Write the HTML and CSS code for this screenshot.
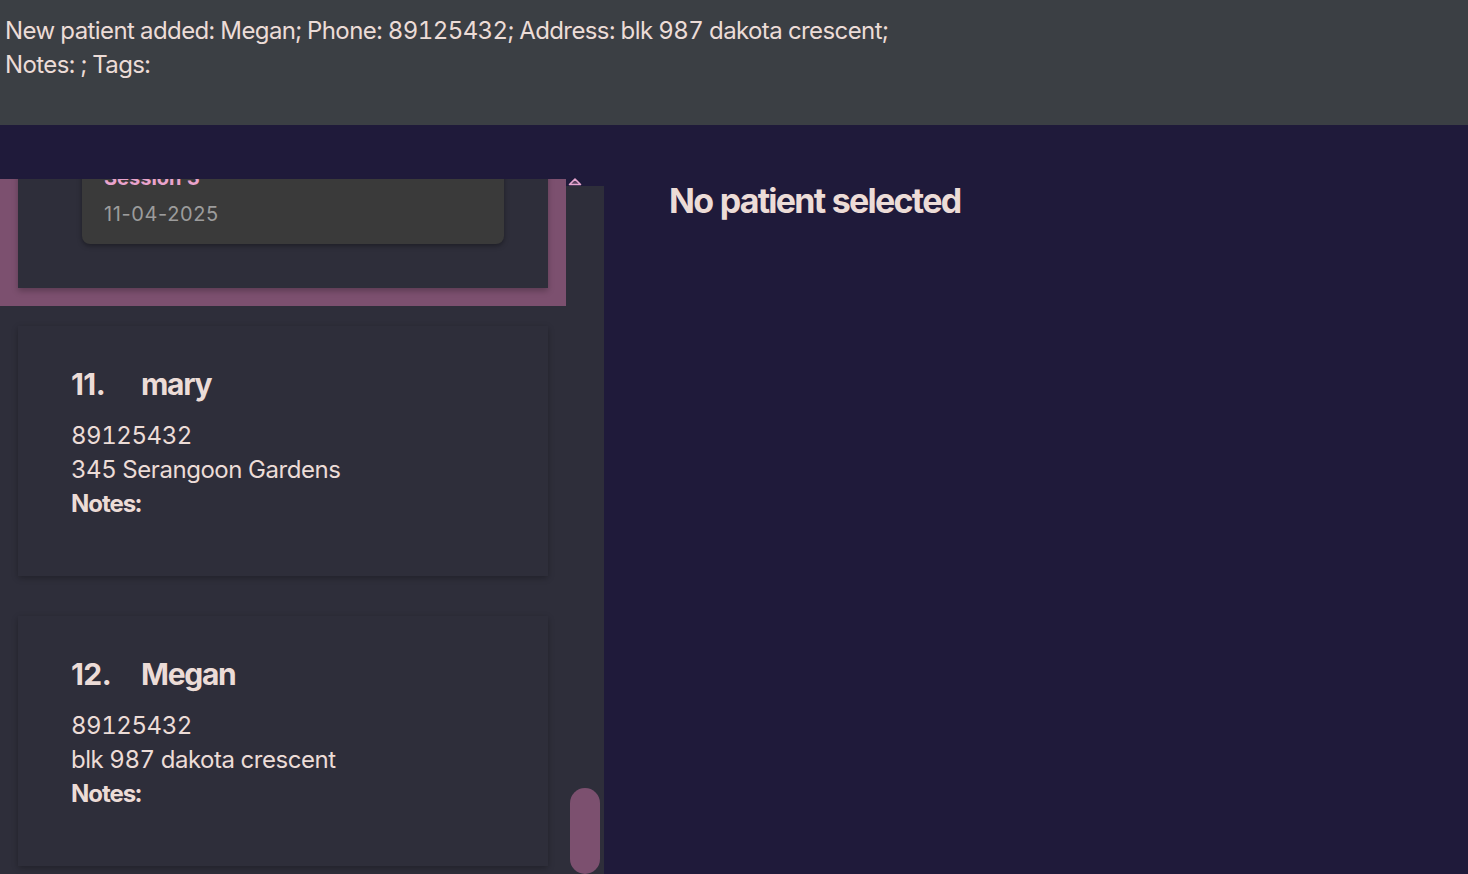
FILE: index.html
```html
<!DOCTYPE html>
<html lang="en">
<head>
<meta charset="utf-8">
<title>Patients</title>
<link rel="stylesheet" href="styles.css">
</head>
<body>
<div class="result">
  <div>New patient added: Megan; Phone: 89125432; Address: blk 987 dakota crescent;</div>
  <div>Notes: ; Tags:</div>
</div>
<div class="main">
  <div class="list-pane">
    <div class="list">
      <div class="list-inner">
        <div class="cell selected">
          <div class="card card-selected">
            <div class="session">
              <div class="session-title">Session 3</div>
              <div class="session-date">11-04-2025</div>
            </div>
          </div>
        </div>
        <div class="cell">
          <div class="card">
            <div class="title"><span class="idx">11.</span><span class="name">mary</span></div>
            <div class="line">89125432</div>
            <div class="line">345 Serangoon Gardens</div>
            <div class="line bold">Notes:</div>
          </div>
        </div>
        <div class="cell">
          <div class="card">
            <div class="title"><span class="idx">12.</span><span class="name">Megan</span></div>
            <div class="line">89125432</div>
            <div class="line">blk 987 dakota crescent</div>
            <div class="line bold">Notes:</div>
          </div>
        </div>
      </div>
    </div>
    <div class="scrollbar">
      <svg class="arrow" width="14" height="10" viewBox="0 0 14 10"><path d="M1.5 8.5 L7 3 L12.5 8.5 Z" fill="#5a4260" stroke="#e7a6cf" stroke-width="1.6" stroke-linejoin="round"/></svg>
      <div class="thumb"></div>
    </div>
  </div>
  <div class="detail">
    <div class="empty">No patient selected</div>
  </div>
</div>
</body>
</html>
```

FILE: styles.css
```css
* { box-sizing: border-box; }
html, body { margin: 0; padding: 0; }
body {
  width: 1468px;
  height: 874px;
  overflow: hidden;
  background: #1f1a3a;
  font-family: Inter, "Noto Sans", sans-serif;
  font-variant-numeric: tabular-nums;
  color: #ecdcd7;
}
.result {
  height: 125px;
  background: #3b3f44;
  padding: 14px 5px 0;
  font-size: 24px;
  line-height: 34px;
  letter-spacing: -0.6px;
}
.main {
  display: flex;
  height: 749px;
}
.list-pane {
  width: 604px;
  margin-top: 54px;
  display: flex;
  flex: none;
}
.list {
  width: 566px;
  height: 695px;
  overflow: hidden;
  background: #2e2e3a;
}
.list-inner {
  margin-top: -27px;
}
.cell {
  padding: 20px 18px;
}
.cell.selected {
  background: #7c506f;
  padding: 0 18px 18px;
}
.card {
  background: #2e2e3a;
  height: 250px;
  padding: 40px 20px 0 53px;
  box-shadow: 0 2px 6px rgba(0, 0, 0, 0.28);
}
.card-selected {
  height: auto;
  padding: 0 44px 44px 64px;
  box-shadow: 0 3px 6px rgba(0, 0, 0, 0.25);
}
.session {
  background: #3a3a3a;
  border-radius: 0 0 8px 8px;
  padding: 12px 22px 16px;
  box-shadow: 0 2px 5px rgba(0, 0, 0, 0.35);
}
.session-title {
  font-size: 20px;
  line-height: 28px;
  font-weight: 700;
  color: #e9a3cc;
}
.session-date {
  margin-top: 8px;
  font-size: 20px;
  line-height: 28px;
  color: #9c9c9c;
  font-variant-numeric: normal;
  letter-spacing: 0.6px;
}
.title {
  font-size: 30px;
  line-height: 36px;
  font-weight: 700;
  letter-spacing: -1.3px;
  margin-bottom: 17px;
  font-variant-numeric: normal;
}
.idx {
  display: inline-block;
  width: 70px;
  letter-spacing: -0.6px;
}
.line {
  font-size: 24px;
  line-height: 34px;
  letter-spacing: -0.45px;
}
.bold { font-weight: 700; letter-spacing: -1px; }
.scrollbar {
  width: 38px;
  margin-top: 7px;
  height: 688px;
  background: #2e2e3a;
  position: relative;
  display: flex;
  flex-direction: column;
  justify-content: flex-end;
  align-items: center;
}
.arrow {
  position: absolute;
  left: 2px;
  top: -10px;
}
.thumb {
  width: 30px;
  height: 86px;
  border-radius: 15px;
  background: #7c506f;
}
.detail {
  flex: 1;
  padding: 55px 0 0 65px;
}
.empty {
  font-size: 34px;
  font-weight: 700;
  letter-spacing: -1.75px;
  line-height: 41px;
}
```
